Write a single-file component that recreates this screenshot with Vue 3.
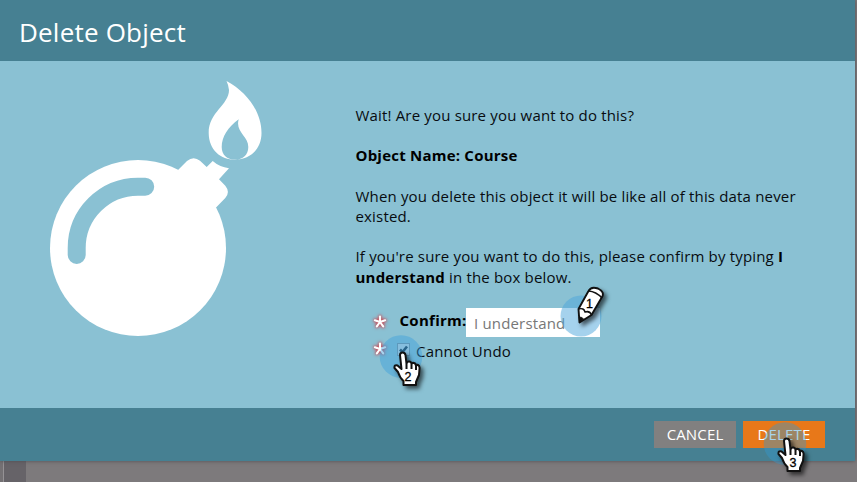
<script setup>
const lobes = [0, 72, 144, 216, 288]
</script>

<template>
  <main class="screen">
    <section class="dialog">
      <header class="header"><h1>Delete Object</h1></header>
      <div class="body">
        <svg class="bomb" viewBox="40 70 240 280" width="240" height="280">
          <g fill="#fff">
            <circle cx="138" cy="248" r="88" />
            <path d="M178.3 169.8 L187 161 Q193.5 155.5 200 160.7 L206.7 167 L212.7 161 Q219.5 167 229 168.3 L219 179.3 L225.3 185.7 Q230.5 192 225.3 198 L216.3 207.3 L190 220 L165 190Z" />
            <path fill-rule="evenodd" d="M226.5 81 C247 92 261.5 112 261.5 133 C261.5 150 249 159.8 235 159.8 C221 159.8 208.7 150 208.7 133 C208.7 112 229 105 229 90 Q228.5 85 226.5 81Z M238.7 119.3 C228 127 221.7 137 221.7 147 C221.7 155 227 159.6 235 159.6 C243 159.6 248.3 155 248.3 147 C248.3 136 235 132 238.7 119.3Z" />
          </g>
          <path d="M145.2 186.7 H138 A61.3 61.3 0 0 0 76.7 248 V255" fill="none" stroke="#8ac1d3" stroke-width="18" stroke-linecap="round" />
        </svg>
        <div class="content">
          <p>Wait! Are you sure you want to do this?</p>
          <p><b>Object Name: Course</b></p>
          <p>When you delete this object it will be like all of this data never<br>existed.</p>
          <p>If you're sure you want to do this, please confirm by typing <b>I</b><br><b>understand</b> in the box below.</p>
          <div class="row confirm">
            <svg class="star" width="18" height="18" viewBox="-9 -9 18 18">
              <path v-for="a in lobes" :key="a" d="M0 0V-5.4" :transform="`rotate(${a})`" />
            </svg>
            <b>Confirm:</b>
            <div class="field">I understand
              <svg class="pencil" width="80" height="70" viewBox="540 275 80 70">
                <circle cx="581" cy="316" r="20.5" fill="#4ba6dc" opacity=".5" />
                <g class="shadow" stroke="#111" stroke-linejoin="round">
                  <path d="M579.5 322.5 L578.5 309 L588.5 291 Q591 286 598 288.5 Q605 292 602 297 L591.5 315Z" fill="#fff" stroke-width="1.9" />
                  <path d="M588.5 291 Q596 291.5 602 298 M578.5 309 Q584 307.5 585 312 Q590 310.5 591.5 315" fill="none" stroke-width="1.5" />
                  <path d="M579.5 322.5 L579.2 317 Q582 317 583.5 319Z" fill="#111" stroke-width="1" />
                </g>
                <text x="586" y="308" class="marker" font-size="12.5">1</text>
              </svg>
            </div>
          </div>
          <div class="row undo">
            <svg class="star" width="18" height="18" viewBox="-9 -9 18 18">
              <path v-for="a in lobes" :key="a" d="M0 0V-5.4" :transform="`rotate(${a})`" />
            </svg>
            <span class="check">
              <svg width="11" height="11" viewBox="0 0 11 11"><path d="M2 5.5 4.5 8 9 2.5" fill="none" stroke="#1b3448" stroke-width="2.6" /></svg>
              <svg class="pointer" width="66" height="70" viewBox="0 0 66 70">
                <circle cx="22" cy="25.5" r="21.3" fill="#3ba0dc" opacity=".45" />
                <g class="shadow"><path class="hand" d="M21 24 Q21 21.5 23.5 21.5 Q26 21.5 26.5 24 L27.5 33 Q28 30 30.5 30.5 Q32.5 31 32.5 33 Q33 31.5 35 32 Q37 32.5 37 35 Q37.5 33.5 39 34 Q41 35 40.5 38 L40 44 L37 51 V54 H24.5 V50 Q21 47 19 41 L15.5 37 Q15 33.5 18.5 34.5 L22.5 38Z M27.5 33V38 M32.5 33V38 M37 35V39" /></g>
                <text x="25.5" y="49.7" class="marker" font-size="12.5">2</text>
              </svg>
            </span>
            <span>Cannot Undo</span>
          </div>
        </div>
      </div>
      <footer class="footer">
        <button class="cancel">CANCEL</button>
        <button class="delete">DELETE
          <svg class="pointer" width="66" height="70" viewBox="0 0 66 70">
            <circle cx="22" cy="26.5" r="21.3" fill="#3498d0" opacity=".42" />
            <g class="shadow"><path class="hand" d="M21 24 Q21 21.5 23.5 21.5 Q26 21.5 26.5 24 L27.5 33 Q28 30 30.5 30.5 Q32.5 31 32.5 33 Q33 31.5 35 32 Q37 32.5 37 35 Q37.5 33.5 39 34 Q41 35 40.5 38 L40 44 L37 51 V54 H24.5 V50 Q21 47 19 41 L15.5 37 Q15 33.5 18.5 34.5 L22.5 38Z M27.5 33V38 M32.5 33V38 M37 35V39" /></g>
            <text x="26.5" y="49.7" class="marker" font-size="12.5">3</text>
          </svg>
        </button>
      </footer>
    </section>
    <div class="backdrop"><span class="edge"></span><span class="rail"></span></div>
  </main>
</template>

<style>
body { margin: 0; }
</style>
<style scoped>
.screen { width: 857px; height: 482px; overflow: hidden; background: #7d7a7c; font-family: "Open Sans", sans-serif; font-size: 15px; color: #080c10; }
.dialog { width: 855px; height: 461px; background: #8ac1d3; box-shadow: 0 0 4px #504e52; position: relative; z-index: 1; }
.header { box-sizing: border-box; height: 61px; background: #468092; padding: 14px 19px; }
h1 { margin: 0; color: #fff; font-size: 26px; line-height: 36px; font-weight: 400; letter-spacing: .2px; }
.body { height: 347px; display: flex; }
.bomb { margin: 9px 75.5px 0 40px; flex: none; }
.content { width: 480px; padding-top: 44.1px; }
p { margin: 0 0 20px; line-height: 20.3px; white-space: nowrap; letter-spacing: .17px; }
p:last-of-type { margin-bottom: 21.1px; }
b { color: #000; font-weight: 700; letter-spacing: .22px; }
.row { display: flex; align-items: center; white-space: nowrap; }
.star { overflow: visible; fill: none; stroke: #fff; stroke-width: 2.1; stroke-linecap: round; filter: drop-shadow(0 0 1.5px #c33f4c) drop-shadow(0 0 1.5px #c66b75); }
.confirm { height: 29px; padding-left: 15.5px; }
.confirm > b { margin-left: 10.5px; width: 66.5px; line-height: 24px; padding-bottom: 4px; flex: none; letter-spacing: .28px; }
.confirm .star { margin-top: -1px; }
.undo .star { margin-top: -3px; }
.field { position: relative; box-sizing: border-box; width: 134px; height: 29px; padding-left: 8px; line-height: 31px; background: #fff; color: #777; letter-spacing: .17px; }
.pencil { position: absolute; left: 74px; top: -33px; overflow: visible; }
.undo { height: 28px; padding-left: 15.5px; letter-spacing: .2px; }
.check { position: relative; width: 11px; height: 11px; box-sizing: border-box; background: #c3d8e1; box-shadow: 0 0 0 1px #7994a2; margin: -2px 7px 0 9px; display: block; }
.check > svg:first-child { display: block; }
.pointer { position: absolute; overflow: visible; }
.check .pointer { left: -19.5px; top: -13px; }
.footer { height: 53px; box-sizing: border-box; background: #468092; display: flex; justify-content: flex-end; padding: 13px 30px 0 0; gap: 7px; }
button { border: 0; padding: 0; width: 82px; height: 27px; color: #fff; background: #818080; font: 15px/27px "Open Sans", sans-serif; letter-spacing: .15px; position: relative; }
.delete { background: #e87819; }
.delete .pointer { left: 20px; top: -4px; }
.hand { fill: #fff; stroke: #111; stroke-width: 2; stroke-linejoin: round; }
.shadow { filter: drop-shadow(3px 3px 2px #0009); }
.marker { font-family: "Liberation Sans", sans-serif; fill: #000; stroke: #000; stroke-width: .3px; letter-spacing: 0; }
.backdrop { height: 21px; display: flex; background: #7d7a7c; }
.edge { width: 3px; border-right: 1px solid #959295; background: #747174; }
.rail { width: 22px; background: #666368; }
</style>
